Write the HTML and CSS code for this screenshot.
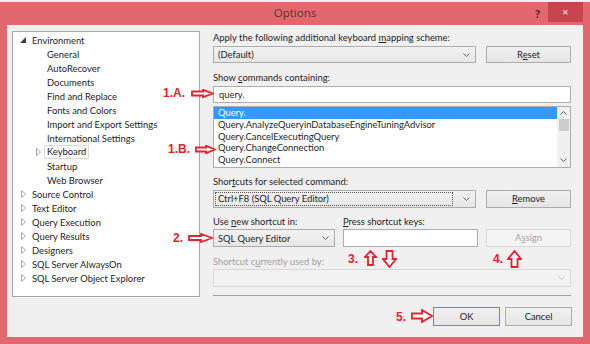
FILE: index.html
```html
<!DOCTYPE html>
<html lang="en">

<head>
    <meta charset="UTF-8">
    <title>Options</title>
    <link rel="stylesheet" href="styles.css">
</head>

<body>
    <div class="window">
        <div class="backdrop"></div>
        <div class="titlebar">
            <span></span>
            <span class="title">Options</span>
            <div class="caption-buttons">
                <span class="help">?</span>
                <span class="close">&#10005;</span>
            </div>
        </div>

        <div class="client">
            <div class="tree">
                <div class="node"><span class="caret"><svg width="6" height="6"><path d="M6 0 L6 6 L0 6 Z" fill="#3c3c3c"/></svg></span><span>Environment</span></div>
                <div class="node child"><span class="caret"></span><span>General</span></div>
                <div class="node child"><span class="caret"></span><span>AutoRecover</span></div>
                <div class="node child"><span class="caret"></span><span>Documents</span></div>
                <div class="node child"><span class="caret"></span><span>Find and Replace</span></div>
                <div class="node child"><span class="caret"></span><span>Fonts and Colors</span></div>
                <div class="node child"><span class="caret"></span><span>Import and Export Settings</span></div>
                <div class="node child"><span class="caret"></span><span>International Settings</span></div>
                <div class="node child"><span class="caret"><svg width="5" height="8"><path d="M0.5 0.5 L4.5 4 L0.5 7.5 Z" fill="none" stroke="#a8a8a8"/></svg></span><span class="selected">Keyboard</span></div>
                <div class="node child"><span class="caret"></span><span>Startup</span></div>
                <div class="node child"><span class="caret"></span><span>Web Browser</span></div>
                <div class="node"><span class="caret"><svg width="5" height="8"><path d="M0.5 0.5 L4.5 4 L0.5 7.5 Z" fill="none" stroke="#a8a8a8"/></svg></span><span>Source Control</span></div>
                <div class="node"><span class="caret"><svg width="5" height="8"><path d="M0.5 0.5 L4.5 4 L0.5 7.5 Z" fill="none" stroke="#a8a8a8"/></svg></span><span>Text Editor</span></div>
                <div class="node"><span class="caret"><svg width="5" height="8"><path d="M0.5 0.5 L4.5 4 L0.5 7.5 Z" fill="none" stroke="#a8a8a8"/></svg></span><span>Query Execution</span></div>
                <div class="node"><span class="caret"><svg width="5" height="8"><path d="M0.5 0.5 L4.5 4 L0.5 7.5 Z" fill="none" stroke="#a8a8a8"/></svg></span><span>Query Results</span></div>
                <div class="node"><span class="caret"><svg width="5" height="8"><path d="M0.5 0.5 L4.5 4 L0.5 7.5 Z" fill="none" stroke="#a8a8a8"/></svg></span><span>Designers</span></div>
                <div class="node"><span class="caret"><svg width="5" height="8"><path d="M0.5 0.5 L4.5 4 L0.5 7.5 Z" fill="none" stroke="#a8a8a8"/></svg></span><span>SQL Server AlwaysOn</span></div>
                <div class="node"><span class="caret"><svg width="5" height="8"><path d="M0.5 0.5 L4.5 4 L0.5 7.5 Z" fill="none" stroke="#a8a8a8"/></svg></span><span>SQL Server Object Explorer</span></div>
            </div>

            <div class="panel">
                <div class="label">Apply the following additional keyboard <u>m</u>apping scheme:</div>
                <div class="row row-scheme">
                    <div class="combo combo-wide"><span>(Default)</span><svg class="chevron" width="7" height="4"><polyline points="0.5,0.5 3.5,3.5 6.5,0.5" fill="none" stroke="#606060"/></svg></div>
                    <div class="button">R<u>e</u>set</div>
                </div>

                <div class="label label-commands">Show <u>c</u>ommands containing:</div>
                <div class="textbox">query.</div>

                <div class="listbox">
                    <div class="items">
                        <div class="item active">Query.</div>
                        <div class="item">Query.AnalyzeQueryinDatabaseEngineTuningAdvisor</div>
                        <div class="item">Query.CancelExecutingQuery</div>
                        <div class="item">Query.ChangeConnection</div>
                        <div class="item">Query.Connect</div>
                    </div>
                    <div class="scrollbar">
                        <svg width="7" height="4"><polyline points="0.5,3.5 3.5,0.5 6.5,3.5" fill="none" stroke="#606060"/></svg>
                        <div class="thumb"></div>
                        <svg class="down" width="7" height="4"><polyline points="0.5,0.5 3.5,3.5 6.5,0.5" fill="none" stroke="#606060"/></svg>
                    </div>
                </div>

                <div class="label label-shortcuts">Shor<u>t</u>cuts for selected command:</div>
                <div class="row row-shortcuts">
                    <div class="combo combo-wide combo-tall"><span class="focus">Ctrl+F8 (SQL Query Editor)</span><svg class="chevron" width="7" height="4"><polyline points="0.5,0.5 3.5,3.5 6.5,0.5" fill="none" stroke="#606060"/></svg></div>
                    <div class="button button-tall"><u>R</u>emove</div>
                </div>

                <div class="row label-pair">
                    <div class="label label-use">Use <u>n</u>ew shortcut in:</div>
                    <div class="label"><u>P</u>ress shortcut keys:</div>
                </div>
                <div class="row row-assign">
                    <div class="combo combo-scope combo-tall"><span>SQL Query Editor</span><svg class="chevron" width="7" height="4"><polyline points="0.5,0.5 3.5,3.5 6.5,0.5" fill="none" stroke="#606060"/></svg></div>
                    <div class="textbox textbox-keys"></div>
                    <div class="button button-tall disabled">A<u>s</u>sign</div>
                </div>

                <div class="label disabled-text label-used">Shortcut c<u>u</u>rrently used by:</div>
                <div class="combo combo-tall combo-disabled"><span></span><svg class="chevron" width="7" height="4"><polyline points="0.5,0.5 3.5,3.5 6.5,0.5" fill="none" stroke="#c4c4c4"/></svg></div>

                <div class="separator"></div>

                <div class="row row-dialog">
                    <div class="button button-dialog default">OK</div>
                    <div class="button button-dialog">Cancel</div>
                </div>
            </div>
        </div>

        <!-- red annotations drawn over the dialog -->
        <span class="note note-1a">1.A.</span>
        <svg class="arrow arrow-1a" width="23" height="9"><polygon points="1,2.5 12,2.5 12,0.8 22,4.5 12,8.2 12,6.5 1,6.5"/></svg>
        <span class="note note-1b">1.B.</span>
        <svg class="arrow arrow-1b" width="21" height="9"><polygon points="1,2.5 11,2.5 11,0.8 20,4.5 11,8.2 11,6.5 1,6.5"/></svg>
        <span class="note note-2">2.</span>
        <svg class="arrow arrow-2" width="25" height="10"><polygon points="1,3 13,3 13,1 24,5 13,9 13,7 1,7"/></svg>
        <span class="note note-3">3.</span>
        <svg class="arrow arrow-3up" width="13" height="16"><polygon points="6.5,1 12,7 9,7 9,15 4,15 4,7 1,7"/></svg>
        <svg class="arrow arrow-3down" width="15" height="18"><polygon points="4.5,1 10.5,1 10.5,9 14,9 7.5,17 1,9 4.5,9"/></svg>
        <span class="note note-4">4.</span>
        <svg class="arrow arrow-4" width="15" height="18"><polygon points="7.5,1 14,9 10.5,9 10.5,17 4.5,17 4.5,9 1,9"/></svg>
        <span class="note note-5">5.</span>
        <svg class="arrow arrow-5" width="22" height="14"><polygon points="1,4.5 11,4.5 11,1 21,7 11,13 11,9.5 1,9.5"/></svg>
    </div>
</body>

</html>
```

FILE: styles.css
```css
* {
    box-sizing: border-box;
}

body {
    margin: 0;
    font-family: Lato, "Open Sans", sans-serif;
    font-size: 9.4px;
    color: #1e1e1e;
    background: #e2676f;
}

.window {
    position: relative;
    width: 590px;
    height: 344px;
    background: #e2676f;
    display: flex;
    flex-direction: column;
    overflow: hidden;
}

.backdrop {
    height: 2px;
    background: #f3efef;
}

.titlebar {
    height: 23px;
    display: grid;
    grid-template-columns: 1fr auto 1fr;
    align-items: center;
}

.title {
    font-family: "Open Sans", sans-serif;
    font-size: 11.5px;
    color: #5a3434;
    margin-top: -2px;
}

.caption-buttons {
    display: flex;
    justify-content: flex-end;
    align-items: flex-start;
    align-self: start;
    padding-right: 7px;
}

.help {
    font-family: "Open Sans", sans-serif;
    font-weight: bold;
    font-size: 10px;
    color: #4a2a2a;
    margin: 5px 8px 0 0;
}

.close {
    width: 35px;
    height: 20px;
    background: #c9454e;
    color: #fbe9ea;
    font-size: 8px;
    line-height: 20px;
    text-align: center;
}

.client {
    flex: 1;
    margin: 0 7px 7px;
    background: #f0f0f0;
    display: flex;
    gap: 13px;
    padding: 6px 0 0 5px;
}

.tree {
    width: 188px;
    height: 266px;
    background: #fff;
    border: 1px solid #a8a8a8;
    padding: 1px 0 0 5px;
}

.node {
    display: flex;
    align-items: center;
    height: 14px;
}

.node.child {
    padding-left: 15px;
}

.caret {
    width: 10px;
    margin-right: 4px;
    display: flex;
    justify-content: center;
    align-items: center;
}

.selected {
    border: 1px solid #dadada;
    margin-left: -3px;
    padding: 0 2px;
    line-height: 12px;
}

.panel {
    width: 358px;
    display: flex;
    flex-direction: column;
}

.label {
    line-height: 13px;
    white-space: nowrap;
}

.row {
    display: flex;
    gap: 10px;
}

.row-scheme {
    margin-top: 2px;
}

.combo {
    height: 17px;
    border: 1px solid #acacac;
    background: linear-gradient(#f2f2f2, #e6e6e6);
    display: flex;
    align-items: center;
    justify-content: space-between;
    padding: 0 5px 0 4px;
}

.combo-wide {
    width: 263px;
}

.combo-tall {
    height: 18px;
}

.combo-scope {
    width: 122px;
}

.combo-disabled {
    margin-top: 1px;
    background: #f2f2f2;
    border-color: #d8d8d8;
}

.focus {
    flex: 1;
    border: 1px dotted #555;
    margin-left: -3px;
    margin-right: 10px;
    padding: 0 2px;
    line-height: 12px;
}

.button {
    width: 85px;
    height: 17px;
    border: 1px solid #acacac;
    background: linear-gradient(#f0f0f0, #e5e5e5);
    text-align: center;
    line-height: 15px;
}

.button-tall {
    height: 18px;
    line-height: 16px;
}

.button.disabled {
    background: #f4f4f4;
    border-color: #d9d9d9;
    color: #a2a2a2;
}

.label-commands {
    margin-top: 8px;
}

.textbox {
    height: 17px;
    margin-top: 2px;
    background: #fff;
    border: 1px solid #abadb3;
    padding-left: 5px;
    line-height: 15px;
}

.listbox {
    height: 62px;
    margin-top: 3px;
    background: #fff;
    border: 1px solid #abadb3;
    display: flex;
}

.items {
    flex: 1;
}

.item {
    line-height: 11.75px;
    padding-left: 4px;
    white-space: nowrap;
}

.item.active {
    background: #3399ff;
    color: #fff;
}

.scrollbar {
    width: 13px;
    background: #f0f0f0;
    display: flex;
    flex-direction: column;
    align-items: center;
    padding-top: 4px;
}

.thumb {
    width: 10px;
    height: 12px;
    background: #cdcdcd;
    margin-top: 4px;
}

.scrollbar .down {
    margin-top: auto;
    margin-bottom: 5px;
}

.label-shortcuts {
    margin-top: 7px;
}

.row-shortcuts {
    margin-top: 2px;
}

.label-pair {
    margin-top: 7px;
    gap: 0;
}

.label-use {
    width: 130px;
}

.row-assign {
    margin-top: 1px;
    gap: 8px;
}

.textbox-keys {
    width: 135px;
    height: 18px;
    margin-top: 0;
}

.disabled-text {
    color: #a0a0a0;
}

.label-used {
    margin-top: 8px;
}

.separator {
    height: 1px;
    background: #a0a0a0;
    margin-top: 8px;
}

.row-dialog {
    margin-top: 11px;
    justify-content: flex-end;
    gap: 5px;
    margin-right: -1px;
}

.button-dialog {
    width: 67px;
    height: 19px;
    line-height: 17px;
}

.button-dialog.default {
    border-color: #4f92cf;
}

.note {
    position: absolute;
    font-family: "Liberation Sans", sans-serif;
    font-weight: bold;
    font-size: 12px;
    line-height: 12px;
    color: #e3232b;
}

.arrow {
    position: absolute;
}

.arrow polygon {
    fill: #fff;
    stroke: #e3232b;
    stroke-width: 1.8;
    stroke-linejoin: miter;
}

.note-1a { left: 163px; top: 87px; }
.arrow-1a { left: 191px; top: 89px; }
.note-1b { left: 168px; top: 143px; }
.arrow-1b { left: 195px; top: 145px; }
.note-2 { left: 173px; top: 232px; }
.arrow-2 { left: 188px; top: 233px; }
.note-3 { left: 348px; top: 253px; }
.arrow-3up { left: 364px; top: 250px; }
.arrow-3down { left: 382px; top: 250px; }
.note-4 { left: 493px; top: 253px; }
.arrow-4 { left: 507px; top: 250px; }
.note-5 { left: 396px; top: 311px; }
.arrow-5 { left: 411px; top: 309px; }
```
